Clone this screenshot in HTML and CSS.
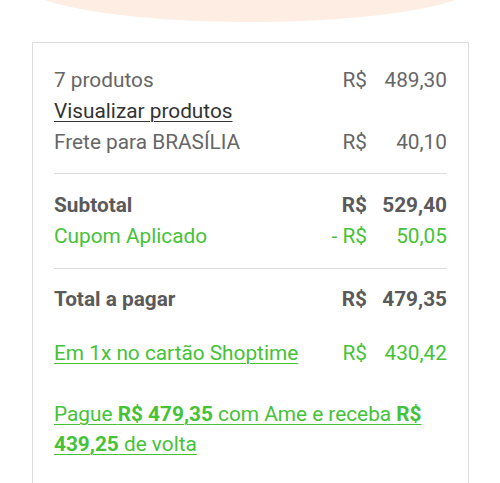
FILE: index.html
```html
<!DOCTYPE html>
<html lang="pt-BR">
<head>
<meta charset="utf-8">
<link rel="stylesheet" href="styles.css">
</head>
<body>
<div class="hero"></div>
<section class="card">
  <div class="group">
    <div class="row">
      <span class="label">7 produtos</span>
      <span class="cur">R$</span>
      <span class="amt">489,30</span>
    </div>
    <div class="row">
      <a class="link" href="#">Visualizar produtos</a>
    </div>
    <div class="row">
      <span class="label">Frete para BRASÍLIA</span>
      <span class="cur">R$</span>
      <span class="amt">40,10</span>
    </div>
  </div>
  <hr class="divider first">
  <div class="group">
    <div class="row bold">
      <span class="label">Subtotal</span>
      <span class="cur">R$</span>
      <span class="amt">529,40</span>
    </div>
    <div class="row green">
      <span class="label">Cupom Aplicado</span>
      <span class="cur">- R$</span>
      <span class="amt">50,05</span>
    </div>
  </div>
  <hr class="divider second">
  <div class="group">
    <div class="row bold">
      <span class="label">Total a pagar</span>
      <span class="cur">R$</span>
      <span class="amt">479,35</span>
    </div>
  </div>
  <div class="group card-pay">
    <div class="row green">
      <a class="glink" href="#">Em 1x no cartão Shoptime</a>
      <span class="cur">R$</span>
      <span class="amt">430,42</span>
    </div>
  </div>
  <p class="ame"><a class="glink" href="#">Pague <b>R$ 479,35</b> com Ame e receba <b>R$ 439,25</b> de volta</a></p>
</section>
</body>
</html>
```
FILE: styles.css
```css
html, body {
  margin: 0;
  padding: 0;
  background: #ffffff;
  overflow: hidden;
}
body {
  font-family: Roboto, "Liberation Sans", Arial, sans-serif;
  font-size: 20.8px;
  line-height: 31px;
  color: #666666;
}
.hero {
  width: 460px;
  height: 80px;
  margin: -58px auto 0;
  border-radius: 50%;
  background: #fdede3;
  filter: blur(0.6px);
}
.card {
  box-sizing: border-box;
  width: 437px;
  min-height: 600px;
  margin: 20px 0 0 32px;
  padding: 22px 21px 0 21px;
  border: 1px solid #dddddd;
  background: #ffffff;
}
.row {
  display: grid;
  grid-template-columns: 1fr auto 80px;
  align-items: baseline;
}
.cur {
  text-align: right;
}
.amt {
  text-align: right;
}
.link {
  color: #333333;
  text-decoration: underline;
  text-decoration-thickness: 1px;
  text-underline-offset: 3px;
  justify-self: start;
}
.bold {
  font-weight: 700;
  color: #5a5a5a;
}
.green {
  color: #45c237;
}
.divider {
  border: 0;
  border-top: 1px solid #dddddd;
  height: 0;
}
.divider.first {
  margin: 15px 0 16px;
}
.divider.second {
  margin: 16px 0 15px;
}
.card-pay {
  margin-top: 23px;
}
.glink {
  color: #45c237;
  text-decoration: underline;
  text-decoration-thickness: 1px;
  text-underline-offset: 3px;
  justify-self: start;
}
.ame {
  margin: 30px 0 0;
  line-height: 30px;
}
.ame b {
  font-weight: 700;
}
```
